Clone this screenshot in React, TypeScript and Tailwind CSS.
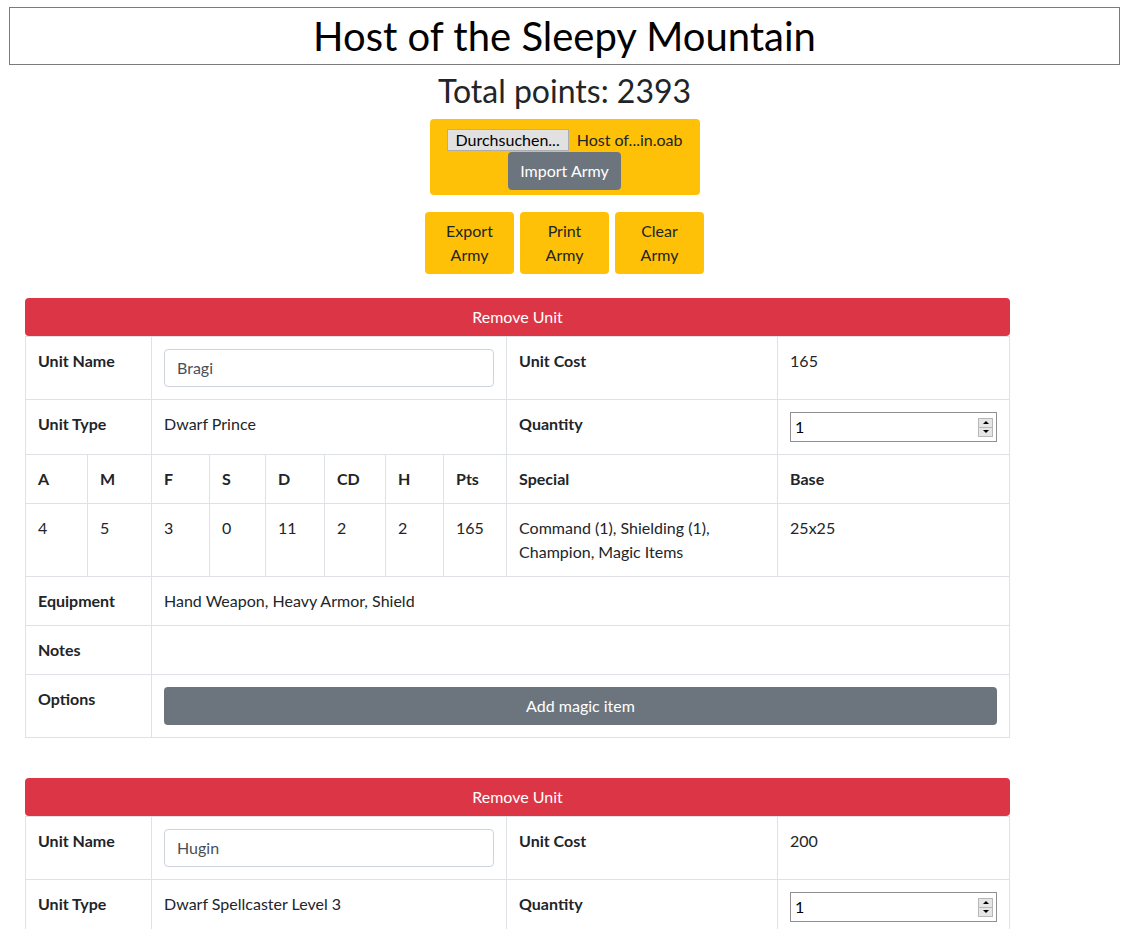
/**
 * Army list page
 * Header, import/export controls and one table per unit
 */

const font = "font-['Segoe_UI','Lato',sans-serif]";

type Unit = {
  name: string;
  type: string;
  cost: number;
  stats?: { a: string; m: string; f: string; s: string; d: string; cd: string; h: string; pts: string };
  special?: string;
  base?: string;
  equipment?: string;
};

const units: Unit[] = [
  {
    name: 'Bragi',
    type: 'Dwarf Prince',
    cost: 165,
    stats: { a: '4', m: '5', f: '3', s: '0', d: '11', cd: '2', h: '2', pts: '165' },
    special: 'Command (1), Shielding (1), Champion, Magic Items',
    base: '25x25',
    equipment: 'Hand Weapon, Heavy Armor, Shield',
  },
  {
    name: 'Hugin',
    type: 'Dwarf Spellcaster Level 3',
    cost: 200,
  },
];

function Spinner() {
  return (
    <div className="flex flex-col w-[15px] h-[19px] border border-[#b8b8b8] bg-[#e6e6e6]">
      <div className="flex-1 flex items-center justify-center border-b border-[#b8b8b8]">
        <div className="w-0 h-0 border-l-[3px] border-r-[3px] border-b-[3px] border-l-transparent border-r-transparent border-b-black" />
      </div>
      <div className="flex-1 flex items-center justify-center">
        <div className="w-0 h-0 border-l-[3px] border-r-[3px] border-t-[3px] border-l-transparent border-r-transparent border-t-black" />
      </div>
    </div>
  );
}

function QuantityInput() {
  return (
    <div className="flex items-center justify-between w-[207px] h-[30px] border border-[#8f8f8f] pl-[4px] pr-[3px] text-black">
      <span>1</span>
      <Spinner />
    </div>
  );
}

const td = 'border border-[#dee2e6] p-3 align-top';
const th = 'border border-[#dee2e6] p-3 align-top font-bold text-left';

function UnitTable({ unit }: { unit: Unit }) {
  return (
    <div className="mb-[40px]">
      <button className="w-full h-[38px] bg-[#dc3545] text-white rounded-[4px] block">Remove Unit</button>
      <table className="w-full table-fixed border-collapse">
        <colgroup>
          <col className="w-[62px]" />
          <col className="w-[64px]" />
          <col className="w-[58px]" />
          <col className="w-[56px]" />
          <col className="w-[59px]" />
          <col className="w-[61px]" />
          <col className="w-[58px]" />
          <col className="w-[63px]" />
          <col className="w-[271px]" />
          <col />
        </colgroup>
        <tbody>
          <tr>
            <th colSpan={2} className={th}>Unit Name</th>
            <td colSpan={6} className={td}>
              <div className="h-[38px] border border-[#ced4da] rounded-[4px] px-3 flex items-center text-[#495057]">
                {unit.name}
              </div>
            </td>
            <th className={th}>Unit Cost</th>
            <td className={td}>{unit.cost}</td>
          </tr>
          <tr>
            <th colSpan={2} className={th}>Unit Type</th>
            <td colSpan={6} className={td}>{unit.type}</td>
            <th className={th}>Quantity</th>
            <td className={td}>
              <QuantityInput />
            </td>
          </tr>
          {unit.stats && (
            <>
              <tr>
                {['A', 'M', 'F', 'S', 'D', 'CD', 'H', 'Pts', 'Special', 'Base'].map((h) => (
                  <th key={h} className={th}>{h}</th>
                ))}
              </tr>
              <tr>
                {Object.values(unit.stats).map((v, i) => (
                  <td key={i} className={td}>{v}</td>
                ))}
                <td className={td}>{unit.special}</td>
                <td className={td}>{unit.base}</td>
              </tr>
              <tr>
                <th colSpan={2} className={th}>Equipment</th>
                <td colSpan={8} className={td}>{unit.equipment}</td>
              </tr>
              <tr>
                <th colSpan={2} className={th}>Notes</th>
                <td colSpan={8} className={td}>
                  <div className="h-[24px]" />
                </td>
              </tr>
              <tr>
                <th colSpan={2} className={th}>Options</th>
                <td colSpan={8} className={td}>
                  <button className="w-full h-[38px] bg-[#6c757d] text-white rounded-[4px] block">Add magic item</button>
                </td>
              </tr>
            </>
          )}
        </tbody>
      </table>
    </div>
  );
}

function App() {
  return (
    <div className={`${font} text-[16px] leading-[24px] text-[#212529] bg-white min-h-screen pt-[7px]`}>
      {/* Header */}
      <div className="mx-[9px] h-[58px] border border-[#7a7a7a] flex items-center justify-center">
        <h1 className="text-[40px] leading-[48px] text-black">Host of the Sleepy Mountain</h1>
      </div>

      <h2 className="text-center text-[32px] leading-[38px] mt-[7px]">Total points: 2393</h2>

      {/* Import */}
      <div className="flex justify-center mt-[9px]">
        <div className="w-[270px] bg-[#ffc107] rounded-[4px] flex flex-col items-center pt-[9px] pb-[5px]">
          <div className="flex items-center gap-[8px]">
            <div className="h-[22px] px-[8px] bg-[#e1e1e1] border border-[#adadad] flex items-center text-black">
              Durchsuchen...
            </div>
            <span>Host of...in.oab</span>
          </div>
          <button className="h-[38px] px-3 bg-[#6c757d] text-white rounded-[4px]">Import Army</button>
        </div>
      </div>

      {/* Actions */}
      <div className="flex justify-center gap-[6px] mt-[17px]">
        {['Export Army', 'Print Army', 'Clear Army'].map((label) => (
          <button key={label} className="w-[89px] bg-[#ffc107] rounded-[4px] py-[7px] px-3 text-[#212529]">
            {label.split(' ')[0]}
            <br />
            {label.split(' ')[1]}
          </button>
        ))}
      </div>

      {/* Units */}
      <div className="ml-[25px] w-[985px] mt-[24px]">
        {units.map((u) => (
          <UnitTable key={u.name} unit={u} />
        ))}
      </div>
    </div>
  );
}

export default App;
